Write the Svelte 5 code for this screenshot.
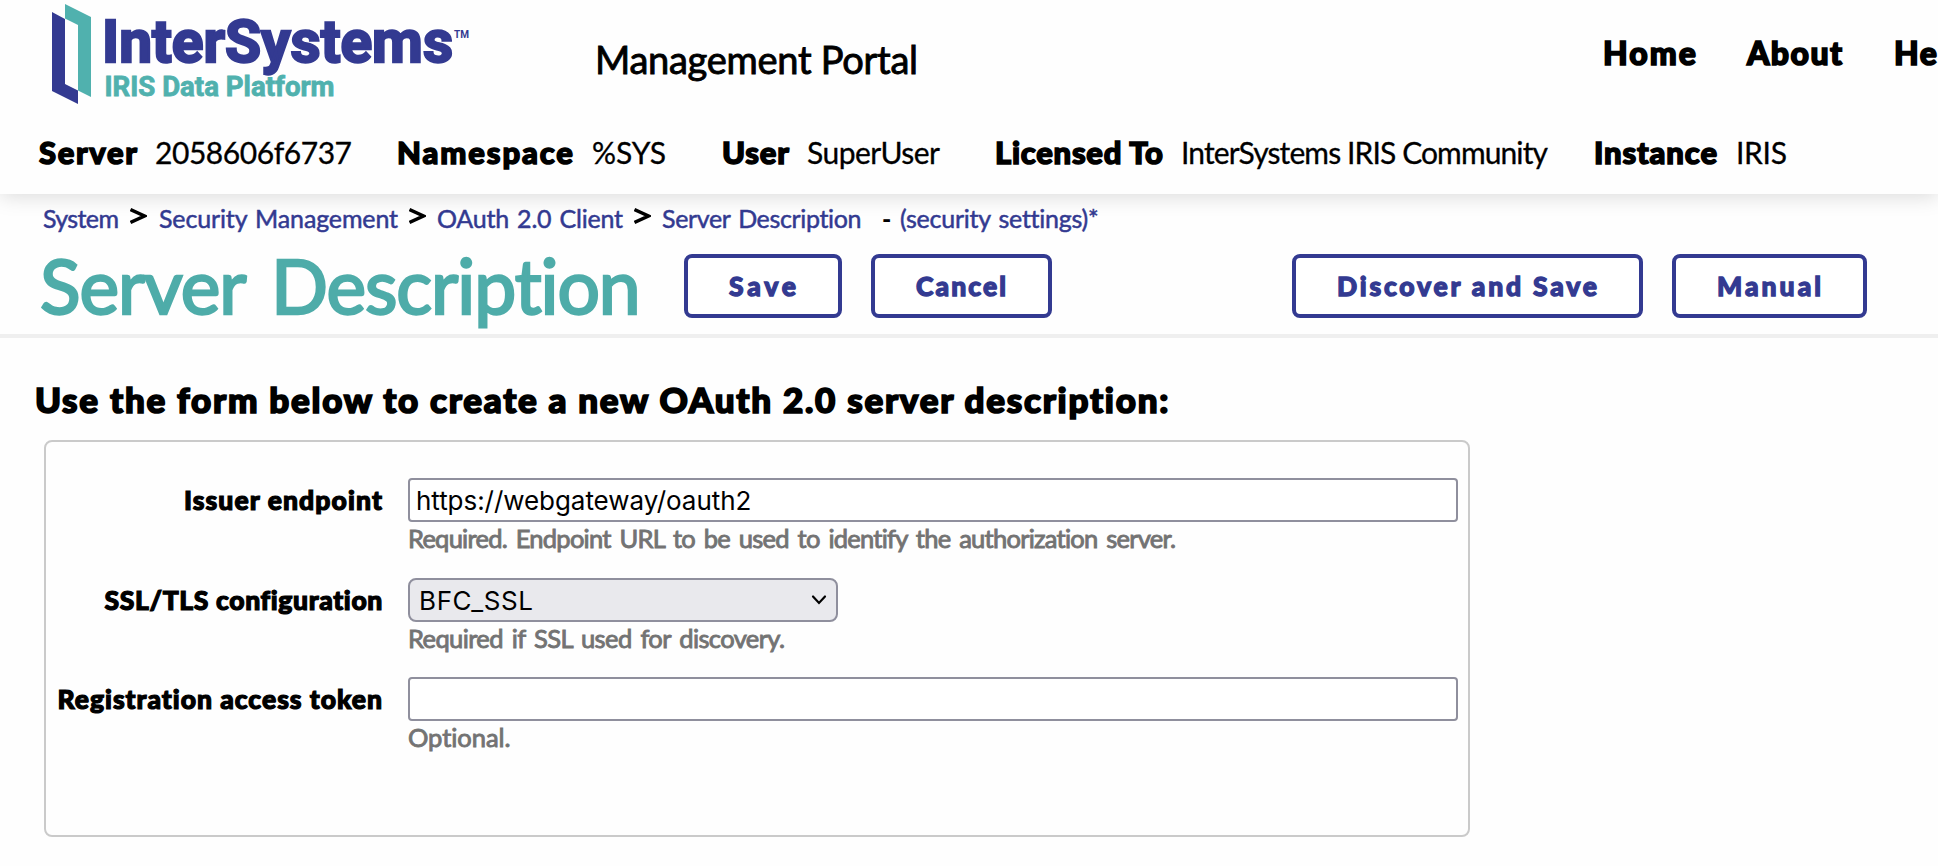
<script>
  // Widens or tightens the tracking so that the text fills the given width.
  function fit(node, width) {
    const range = document.createRange();
    range.selectNodeContents(node);
    node.style.letterSpacing = '0px';
    const natural = range.getBoundingClientRect().width;
    const count = node.textContent.length;
    if (count > 1) node.style.letterSpacing = (width - natural) / (count - 1) + 'px';
  }

  const info = [
    { label: 'Server', lw: 98, value: '2058606f6737', vw: 197 },
    { label: 'Namespace', lw: 176, value: '%SYS', vw: 74 },
    { label: 'User', lw: 67, value: 'SuperUser', vw: 133 },
    { label: 'Licensed To', lw: 168, value: 'InterSystems IRIS Community', vw: 367 },
    { label: 'Instance', lw: 123, value: 'IRIS', vw: 51 },
  ];
  const crumbs = [
    { text: 'System', w: 76 },
    { text: 'Security Management', w: 239 },
    { text: 'OAuth 2.0 Client', w: 186 },
    { text: 'Server Description', w: 200 },
  ];
  let issuer = $state('https://webgateway/oauth2');
  let token = $state('');
</script>

<header>
  <div class="top">
    <svg class="logo" width="430" height="110" viewBox="0 0 430 110" role="img" aria-label="InterSystems IRIS Data Platform">
      <path d="M12 12 25 19V84L38 90.500V104L12 91Z" fill="#333a91" />
      <path d="M25 4 51 17V97L38 90.500V25L25 18.500Z" fill="#50b1ae" />
      <text x="62" y="61.500" class="brand" textLength="351" lengthAdjust="spacingAndGlyphs">InterSystems</text>
      <text x="414" y="38" class="tm" textLength="15" lengthAdjust="spacingAndGlyphs">TM</text>
      <text x="64.500" y="96" class="product" textLength="230" lengthAdjust="spacingAndGlyphs">IRIS Data Platform</text>
    </svg>
    <div class="portal" use:fit={323}>Management Portal</div>
    <nav>
      <a href="#home" use:fit={93}>Home</a>
      <a href="#about" use:fit={95}>About</a>
      <a href="#help" use:fit={72}>Help</a>
    </nav>
  </div>
  <div class="info">
    {#each info as item}
      <b use:fit={item.lw}>{item.label}</b>
      <span use:fit={item.vw}>{item.value}</span>
    {/each}
  </div>
</header>

<div class="crumbs">
  {#each crumbs as c, i}
    {#if i}<svg width="17" height="18" viewBox="0 0 17 18"><path d="M0.500 2.500 14.500 9 0.500 15.500" /></svg>{/if}
    <a href="#crumb" use:fit={c.w}>{c.text}</a>
  {/each}
  <i>-</i>
  <a href="#settings" use:fit={198}>(security settings)*</a>
</div>

<div class="titlebar">
  <h1 use:fit={602}>Server Description</h1>
  <button class="save"><span use:fit={67}>Save</span></button>
  <button class="cancel"><span use:fit={90}>Cancel</span></button>
  <button class="discover"><span use:fit={260}>Discover and Save</span></button>
  <button class="manual"><span use:fit={104}>Manual</span></button>
</div>

<main>
  <h2 use:fit={1134}>Use the form below to create a new OAuth 2.0 server description:</h2>
  <form>
    <label for="issuer"><span use:fit={198}>Issuer endpoint</span></label>
    <div class="field">
      <input id="issuer" bind:value={issuer} />
      <p use:fit={769}>Required. Endpoint URL to be used to identify the authorization server.</p>
    </div>
    <label for="ssl"><span use:fit={278}>SSL/TLS configuration</span></label>
    <div class="field">
      <button type="button" id="ssl" class="select">
        <span use:fit={114}>BFC_SSL</span>
        <svg width="16" height="12" viewBox="0 0 16 12"><path d="M2 2.500 8 9 14 2.500" /></svg>
      </button>
      <p use:fit={377}>Required if SSL used for discovery.</p>
    </div>
    <label for="token"><span use:fit={325}>Registration access token</span></label>
    <div class="field">
      <input id="token" bind:value={token} />
      <p use:fit={103}>Optional.</p>
    </div>
  </form>
</main>

<style>
  :global(body) {
    background: #fefefe;
    font-family: Lato, "Open Sans", sans-serif;
    color: #000;
    overflow: hidden;
  }
  :global(#app) { width: 1938px; height: 866px; overflow: hidden; }
  * { box-sizing: border-box; }
  a { text-decoration: none; color: inherit; }
  a, b, i, span, h1, h2, p, .portal { white-space: nowrap; }

  header { position: relative; height: 194px; box-shadow: 0 2px 20px rgba(0, 0, 0, 0.15); }
  .top { display: flex; align-items: flex-start; height: 132px; padding-left: 40px; }
  .logo { flex: none; display: block; }
  .logo text { font-family: Roboto, sans-serif; font-weight: 700; }
  .brand { font-size: 60px; fill: #333a91; stroke: #333a91; stroke-width: 2.400; }
  .tm { font-size: 10px; fill: #333a91; }
  .product { font-size: 27.500px; fill: #50b1ae; stroke: #50b1ae; stroke-width: 0.800; }
  .portal {
    width: 1006px;
    margin: 39px 0 0 125px;
    font-size: 38px;
    line-height: 40px;
    flex: none;
    -webkit-text-stroke: 0.9px #000;
  }
  nav {
    display: grid;
    grid-template-columns: 144px 147px 80px;
    margin: 33px 0 0 2px;
    font-size: 32px;
    line-height: 40px;
    font-weight: 900;
    flex: none;
    -webkit-text-stroke: 1.6px #000;
  }
  .info {
    display: grid;
    grid-template-columns: 116px 242px 195px 130px 85px 188px 186px 413px 142px 60px;
    padding-left: 39px;
    font-size: 30px;
    line-height: 41px;
  }
  .info b { font-size: 31px; font-weight: 900; -webkit-text-stroke: 1.5px #000; }
  .info span { -webkit-text-stroke: 0.3px #000; }

  .crumbs {
    display: grid;
    grid-template-columns: 87px 29px 250px 28px 197px 28px 220px 18px 200px;
    height: 39px;
    padding: 9px 0 0 43px;
    font-size: 25px;
    line-height: 31px;
    color: #333a91;
  }
  .crumbs a { -webkit-text-stroke: 0.5px #333a91; word-spacing: 2px; }
  .crumbs svg { margin-top: 4px; fill: none; stroke: #000; stroke-width: 3.400; }
  .crumbs i { color: #000; font-style: normal; font-weight: 900; }

  .titlebar {
    display: flex;
    align-items: flex-start;
    height: 105px;
    padding-left: 40px;
    border-bottom: 4px solid #efefef;
  }
  h1 {
    width: 644px;
    margin: 12px 0 0;
    font-size: 75px;
    line-height: 80px;
    font-weight: 400;
    color: #4eaca9;
    flex: none;
    word-spacing: 9px;
    -webkit-text-stroke: 2.4px #4eaca9;
  }
  .titlebar button {
    height: 64px;
    margin: 21px 0 0;
    padding: 0 0 0 41px;
    border: 4px solid #333a91;
    border-radius: 8px;
    background: #fff;
    color: #333a91;
    font: 900 26.500px/56px Lato, sans-serif;
    text-align: left;
    flex: none;
    -webkit-text-stroke: 1.3px #333a91;
  }
  .titlebar .save { width: 158px; }
  .titlebar .cancel { width: 181px; margin-left: 29px; }
  .titlebar .discover { width: 351px; margin-left: 240px; }
  .titlebar .manual { width: 195px; margin-left: 29px; }

  main { padding: 41px 0 0 35px; }
  h2 {
    margin: 0;
    font-size: 35px;
    line-height: 41px;
    font-weight: 900;
    -webkit-text-stroke: 1.7px #000;
  }
  form {
    display: grid;
    grid-template-columns: 337px 1050px;
    grid-template-rows: 100px 99px 99px;
    column-gap: 25px;
    width: 1426px;
    height: 397px;
    margin: 20px 0 0 9px;
    padding-top: 36px;
    border: 2px solid #cacaca;
    border-radius: 8px;
  }
  label {
    display: flex;
    justify-content: flex-end;
    font-size: 26.500px;
    line-height: 45px;
    font-weight: 900;
    -webkit-text-stroke: 1.2px #000;
  }
  input, .select {
    display: flex;
    align-items: center;
    width: 1050px;
    height: 44px;
    margin: 0;
    padding: 0 6px;
    border: 2px solid #8f8f9d;
    border-radius: 4px;
    background: #fff;
    color: #000;
    font: 26px/40px Inter, sans-serif;
    letter-spacing: -0.050px;
    outline: none;
  }
  .select {
    justify-content: space-between;
    width: 430px;
    padding: 0 9px;
    border-radius: 8px;
    background: #e9e9ed;
  }
  .select span { padding-top: 1px; }
  .select path { fill: none; stroke: #000; stroke-width: 2.200; stroke-linecap: round; }
  p {
    margin: 1px 0 0;
    font-size: 25.500px;
    line-height: 30px;
    color: #737373;
    word-spacing: 3px;
    -webkit-text-stroke: 0.9px #737373;
  }
</style>
